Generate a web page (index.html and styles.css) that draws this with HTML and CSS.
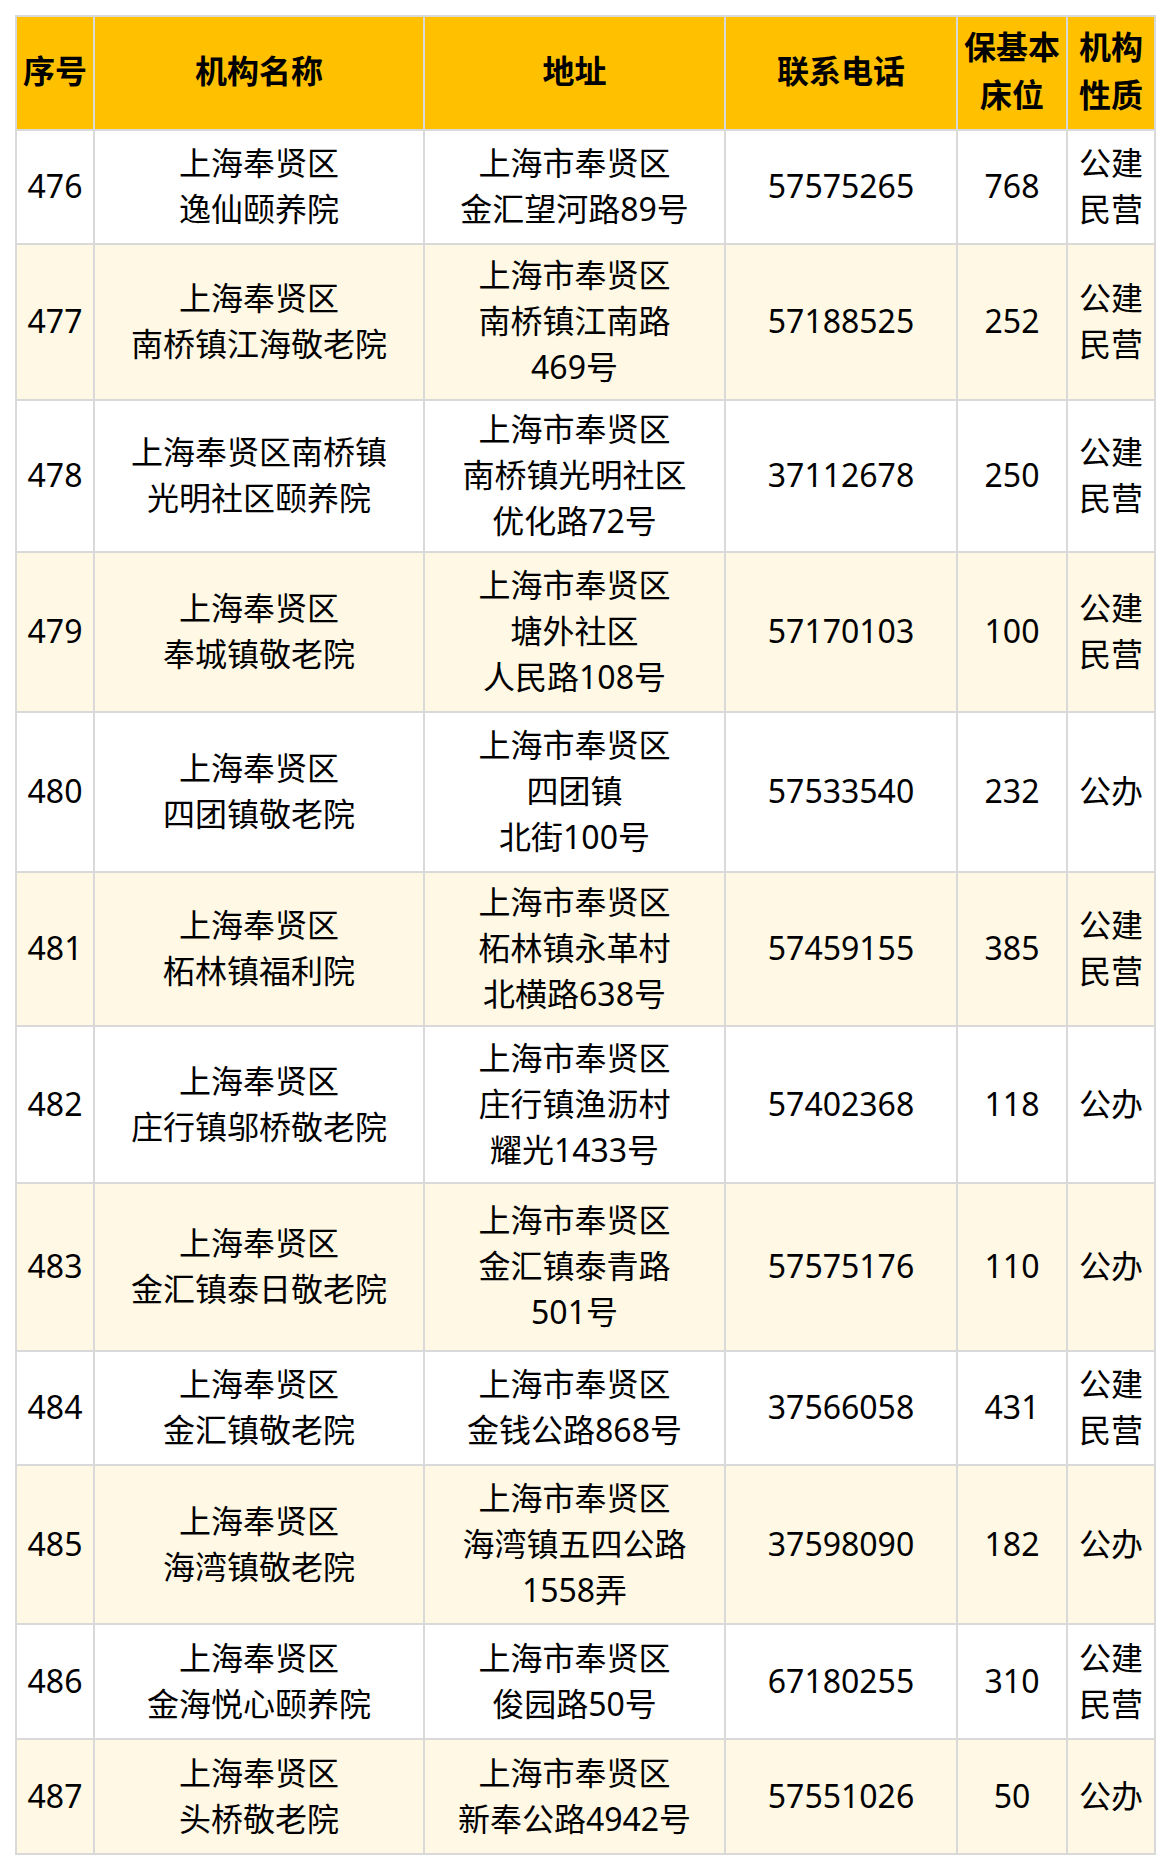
FILE: index.html
```html
<!DOCTYPE html>
<html lang="zh-CN">
<head>
<meta charset="utf-8">
<title>上海奉贤区养老机构</title>
<link rel="stylesheet" href="styles.css">
</head>
<body>
<div class="table" role="table">
  <div class="row head h112" role="row">
    <div class="cell" role="columnheader">序号</div>
    <div class="cell" role="columnheader">机构名称</div>
    <div class="cell" role="columnheader">地址</div>
    <div class="cell" role="columnheader">联系电话</div>
    <div class="cell" role="columnheader">保基本<br>床位</div>
    <div class="cell" role="columnheader">机构<br>性质</div>
  </div>
  <div class="row odd h112" role="row">
    <div class="cell">476</div>
    <div class="cell">上海奉贤区<br>逸仙颐养院</div>
    <div class="cell">上海市奉贤区<br>金汇望河路89号</div>
    <div class="cell">57575265</div>
    <div class="cell">768</div>
    <div class="cell">公建<br>民营</div>
  </div>
  <div class="row even h154" role="row">
    <div class="cell">477</div>
    <div class="cell">上海奉贤区<br>南桥镇江海敬老院</div>
    <div class="cell">上海市奉贤区<br>南桥镇江南路<br>469号</div>
    <div class="cell">57188525</div>
    <div class="cell">252</div>
    <div class="cell">公建<br>民营</div>
  </div>
  <div class="row odd h150" role="row">
    <div class="cell">478</div>
    <div class="cell">上海奉贤区南桥镇<br>光明社区颐养院</div>
    <div class="cell">上海市奉贤区<br>南桥镇光明社区<br>优化路72号</div>
    <div class="cell">37112678</div>
    <div class="cell">250</div>
    <div class="cell">公建<br>民营</div>
  </div>
  <div class="row even h158" role="row">
    <div class="cell">479</div>
    <div class="cell">上海奉贤区<br>奉城镇敬老院</div>
    <div class="cell">上海市奉贤区<br>塘外社区<br>人民路108号</div>
    <div class="cell">57170103</div>
    <div class="cell">100</div>
    <div class="cell">公建<br>民营</div>
  </div>
  <div class="row odd h158" role="row">
    <div class="cell">480</div>
    <div class="cell">上海奉贤区<br>四团镇敬老院</div>
    <div class="cell">上海市奉贤区<br>四团镇<br>北街100号</div>
    <div class="cell">57533540</div>
    <div class="cell">232</div>
    <div class="cell">公办</div>
  </div>
  <div class="row even h152" role="row">
    <div class="cell">481</div>
    <div class="cell">上海奉贤区<br>柘林镇福利院</div>
    <div class="cell">上海市奉贤区<br>柘林镇永革村<br>北横路638号</div>
    <div class="cell">57459155</div>
    <div class="cell">385</div>
    <div class="cell">公建<br>民营</div>
  </div>
  <div class="row odd h155" role="row">
    <div class="cell">482</div>
    <div class="cell">上海奉贤区<br>庄行镇邬桥敬老院</div>
    <div class="cell">上海市奉贤区<br>庄行镇渔沥村<br>耀光1433号</div>
    <div class="cell">57402368</div>
    <div class="cell">118</div>
    <div class="cell">公办</div>
  </div>
  <div class="row even h166" role="row">
    <div class="cell">483</div>
    <div class="cell">上海奉贤区<br>金汇镇泰日敬老院</div>
    <div class="cell">上海市奉贤区<br>金汇镇泰青路<br>501号</div>
    <div class="cell">57575176</div>
    <div class="cell">110</div>
    <div class="cell">公办</div>
  </div>
  <div class="row odd h112" role="row">
    <div class="cell">484</div>
    <div class="cell">上海奉贤区<br>金汇镇敬老院</div>
    <div class="cell">上海市奉贤区<br>金钱公路868号</div>
    <div class="cell">37566058</div>
    <div class="cell">431</div>
    <div class="cell">公建<br>民营</div>
  </div>
  <div class="row even h157" role="row">
    <div class="cell">485</div>
    <div class="cell">上海奉贤区<br>海湾镇敬老院</div>
    <div class="cell">上海市奉贤区<br>海湾镇五四公路<br>1558弄</div>
    <div class="cell">37598090</div>
    <div class="cell">182</div>
    <div class="cell">公办</div>
  </div>
  <div class="row odd h113" role="row">
    <div class="cell">486</div>
    <div class="cell">上海奉贤区<br>金海悦心颐养院</div>
    <div class="cell">上海市奉贤区<br>俊园路50号</div>
    <div class="cell">67180255</div>
    <div class="cell">310</div>
    <div class="cell">公建<br>民营</div>
  </div>
  <div class="row even h113" role="row">
    <div class="cell">487</div>
    <div class="cell">上海奉贤区<br>头桥敬老院</div>
    <div class="cell">上海市奉贤区<br>新奉公路4942号</div>
    <div class="cell">57551026</div>
    <div class="cell">50</div>
    <div class="cell">公办</div>
  </div>
</div>
</body>
</html>
```

FILE: styles.css
```css
html, body {
  margin: 0;
  padding: 0;
  background: #ffffff;
}

body {
  padding: 15px;
  font-family: "Noto Sans", "Noto Sans CJK SC", sans-serif;
  font-size: 32px;
  line-height: 46px;
  color: #000000;
}

.table {
  display: flex;
  flex-direction: column;
  gap: 2px;
  width: max-content;
  padding: 2px;
  background: #d9d9d9;
}

.row {
  display: grid;
  grid-template-columns: 76px 328px 299px 230px 108px 86px;
  column-gap: 2px;
}

.cell {
  display: flex;
  align-items: center;
  justify-content: center;
  text-align: center;
  white-space: nowrap;
  padding-bottom: 2px;
}

.head .cell {
  background: #ffc000;
  font-weight: 700;
  line-height: 48px;
  padding-bottom: 5px;
}

.odd .cell {
  background: #ffffff;
}

.even .cell {
  background: #fff8e5;
}

.h112 { height: 112px; }
.h113 { height: 113px; }
.h150 { height: 150px; }
.h152 { height: 152px; }
.h154 { height: 154px; }
.h155 { height: 155px; }
.h157 { height: 157px; }
.h158 { height: 158px; }
.h166 { height: 166px; }
```
